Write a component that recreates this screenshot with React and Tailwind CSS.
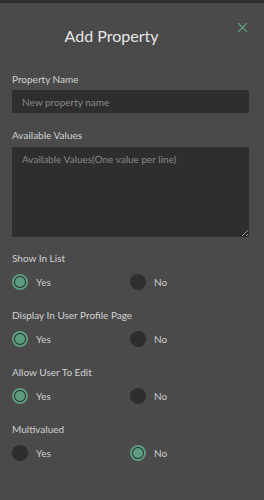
import React from "react";

function Radio({ label, checked }) {
  return (
    <div className="flex items-center w-[118px]">
      {checked ? (
        <span className="w-4 h-4 rounded-full border-2 border-[#5c9c7f] bg-[#2b2b2b] flex items-center justify-center">
          <span className="w-[10px] h-[10px] rounded-full bg-[#5c9c7f]"></span>
        </span>
      ) : (
        <span className="w-4 h-4 rounded-full bg-[#2e2e2e]"></span>
      )}
      <span className="ml-2 text-[10px] text-[#cfcfcf]">{label}</span>
    </div>
  );
}

function RadioGroup({ title, value }) {
  return (
    <div className="mt-[17px]">
      <p className="text-[10px] text-[#d2d2d2] leading-[16px]">{title}</p>
      <div className="flex mt-[8px] h-[16px] items-center">
        <Radio label="Yes" checked={value} />
        <Radio label="No" checked={!value} />
      </div>
    </div>
  );
}

export default function App() {
  return (
    <div
      className="w-[264px] h-[500px] bg-[#4a4a4a] border-t-[3px] border-[#2c2c30] overflow-hidden"
      style={{ fontFamily: 'Lato, "Open Sans", sans-serif' }}
    >
      <div className="relative pl-3 pr-[15px]">
        <h1 className="text-center text-[16px] text-[#e6e6e6] pt-[22px] leading-[22px] pr-[38px]">
          Add Property
        </h1>
        <button className="absolute right-[16px] top-[19px] text-[#5c9c7f]">
          <svg width="11" height="11" viewBox="0 0 11 11" fill="none" stroke="currentColor" strokeWidth="1.4">
            <path d="M1 1 L10 10 M10 1 L1 10" />
          </svg>
        </button>

        <p className="mt-[24px] text-[10px] text-[#d2d2d2] leading-[16px]">Property Name</p>
        <input
          className="mt-[3px] w-full h-[23px] bg-[#2e2e2e] rounded-[2px] px-[10px] text-[10px] text-[#ddd] placeholder-[#888] outline-none"
          placeholder="New property name"
        />

        <p className="mt-[14px] text-[10px] text-[#d2d2d2] leading-[16px]">Available Values</p>
        <textarea
          className="mt-[4px] w-full h-[90px] bg-[#2e2e2e] rounded-[2px] px-[10px] py-[5px] text-[10px] text-[#ddd] placeholder-[#888] outline-none block"
          placeholder="Available Values(One value per line)"
        />

        <div className="-mt-[4px]">
          <RadioGroup title="Show In List" value={true} />
          <RadioGroup title="Display In User Profile Page" value={true} />
          <RadioGroup title="Allow User To Edit" value={true} />
          <RadioGroup title="Multivalued" value={false} />
        </div>
      </div>
    </div>
  );
}
